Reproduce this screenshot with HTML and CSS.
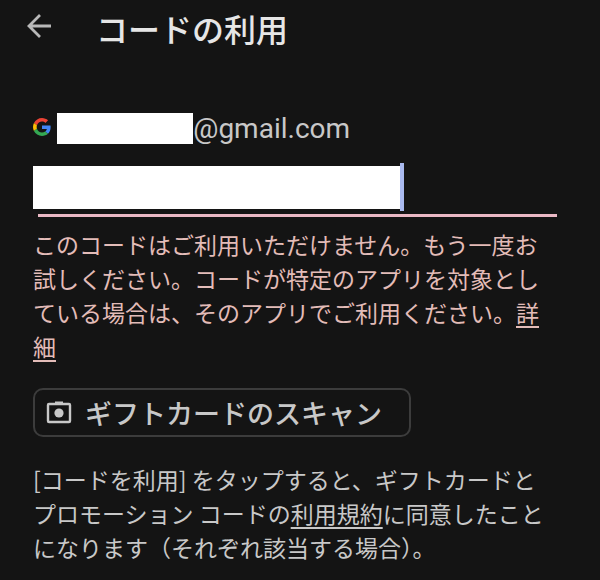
FILE: index.html
```
<!DOCTYPE html>
<html lang="ja">
<head>
    <meta charset="UTF-8">
    <meta name="viewport" content="width=device-width, initial-scale=1.0">
    <title>コードの利用</title>
    <link rel="stylesheet" href="styles.css">
</head>
<body>

    <!-- Header -->
    <header class="header">
        <button class="back-button" type="button" aria-label="戻る">
            <svg width="24" height="24" viewBox="0 0 24 24" fill="none" stroke="currentColor" stroke-width="2.8">
                <path d="M24 12H2M13 1L2 12l11 11"/>
            </svg>
        </button>
        <h1>コードの利用</h1>
    </header>

    <main class="container">
        <!-- Account -->
        <div class="account">
            <svg class="google-logo" width="18" height="18" viewBox="0 0 48 48">
                <path fill="#ea4335" d="M24 9.5c3.54 0 6.71 1.22 9.21 3.6l6.85-6.85C35.9 2.38 30.47 0 24 0 14.62 0 6.51 5.38 2.56 13.22l7.98 6.19C12.43 13.72 17.74 9.5 24 9.5z"/>
                <path fill="#4285f4" d="M46.98 24.55c0-1.57-.15-3.09-.38-4.55H24v9.02h12.94c-.58 2.96-2.26 5.48-4.78 7.18l7.73 6c4.51-4.18 7.09-10.36 7.09-17.65z"/>
                <path fill="#fbbc05" d="M10.53 28.59c-.48-1.45-.76-2.99-.76-4.59s.27-3.14.76-4.59l-7.98-6.19C.92 16.46 0 20.12 0 24c0 3.88.92 7.54 2.56 10.78l7.97-6.19z"/>
                <path fill="#34a853" d="M24 48c6.48 0 11.93-2.13 15.89-5.81l-7.73-6c-2.15 1.45-4.92 2.3-8.16 2.3-6.26 0-11.57-4.22-13.47-9.91l-7.98 6.19C6.51 42.62 14.62 48 24 48z"/>
            </svg>
            <span class="account-name"></span>
            <span class="account-domain">@gmail.com</span>
        </div>

        <!-- Redeem form -->
        <form>
            <div class="code-field">
                <input type="text" id="code" name="code" aria-label="コード" aria-describedby="codeError">
                <span class="caret"></span>
            </div>
            <p class="error" id="codeError">このコードはご利用いただけません。もう一度お試しください。コードが特定のアプリを対象としている場合は、そのアプリでご利用ください。<a href="#">詳細</a></p>

            <button class="scan-button" type="button">
                <svg width="26" height="26" viewBox="0 0 26 26" fill="none" stroke="currentColor" stroke-width="2.4">
                    <rect x="2" y="4" width="22" height="18" rx="1"/>
                    <path d="M9 3h8" stroke-width="3"/>
                    <circle cx="13" cy="13" r="4.6" fill="currentColor" stroke="none"/>
                </svg>
                ギフトカードのスキャン
            </button>
        </form>

        <p class="terms">[コードを利用] をタップすると、ギフトカードとプロモーション コードの<a href="#">利用規約</a>に同意したことになります（それぞれ該当する場合）。</p>
    </main>

</body>
</html>
```
FILE: styles.css
```
body {
    font-family: "Noto Sans CJK JP", sans-serif;
    background-color: #141414;
    color: #c8c8c8;
    margin: 0;
}

.header {
    display: flex;
    align-items: center;
    gap: 45px;
    padding: 4px 27px 0;
}

.back-button {
    display: flex;
    padding: 0;
    margin-bottom: 4px;
    border: none;
    background: none;
    color: #b8b8b8;
    cursor: pointer;
}

h1 {
    margin: 0;
    font-size: 32px;
    line-height: 48px;
    font-weight: 500;
    color: #e6e6e6;
}

.container {
    padding: 61px 43px 16px 33px;
}

.account {
    display: flex;
    align-items: center;
    height: 31px;
    font-family: Roboto, sans-serif;
    font-size: 28px;
}

.account-name {
    width: 26%;
    height: 31px;
    margin-left: 6px;
    background-color: #fff;
}

.google-logo {
    margin-top: -4px;
}

.code-field {
    display: flex;
    align-items: center;
    margin-top: 19px;
    padding-bottom: 6px;
    background: linear-gradient(#eab8c4, #eab8c4) 5px 100% / 100% 3px no-repeat;
}

.code-field input {
    box-sizing: border-box;
    width: 70%;
    height: 43px;
    padding: 0 8px;
    border: none;
    outline: none;
    background-color: #fff;
    color: #141414;
    font-size: 28px;
}

.caret {
    width: 4px;
    height: 48px;
    background-color: #a9b9ee;
}

.error,
.terms {
    margin: 0;
    font-size: 23px;
    line-height: 34px;
}

.error {
    margin-top: 10px;
    color: #e3bcb8;
}

.terms {
    padding-right: 10px;
}

a {
    color: inherit;
    text-decoration-thickness: 2px;
    text-underline-offset: 4px;
}

.scan-button {
    display: flex;
    align-items: center;
    gap: 13px;
    height: 49px;
    margin: 25px 0;
    padding: 0 27px 0 11px;
    border: 2px solid #3c3c3c;
    border-radius: 10px;
    background: none;
    color: #c8c8c8;
    font-family: inherit;
    font-size: 27px;
    font-weight: 500;
    cursor: pointer;
}
```
